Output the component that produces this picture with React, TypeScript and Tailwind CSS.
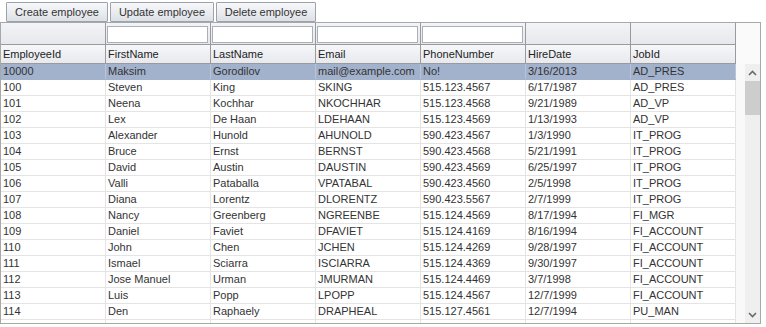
const columns = ['EmployeeId', 'FirstName', 'LastName', 'Email', 'PhoneNumber', 'HireDate', 'JobId'];
const filterable = [false, true, true, true, true, false, false];

const rows = [
  ['10000', 'Maksim', 'Gorodilov', 'mail@example.com', 'No!', '3/16/2013', 'AD_PRES'],
  ['100', 'Steven', 'King', 'SKING', '515.123.4567', '6/17/1987', 'AD_PRES'],
  ['101', 'Neena', 'Kochhar', 'NKOCHHAR', '515.123.4568', '9/21/1989', 'AD_VP'],
  ['102', 'Lex', 'De Haan', 'LDEHAAN', '515.123.4569', '1/13/1993', 'AD_VP'],
  ['103', 'Alexander', 'Hunold', 'AHUNOLD', '590.423.4567', '1/3/1990', 'IT_PROG'],
  ['104', 'Bruce', 'Ernst', 'BERNST', '590.423.4568', '5/21/1991', 'IT_PROG'],
  ['105', 'David', 'Austin', 'DAUSTIN', '590.423.4569', '6/25/1997', 'IT_PROG'],
  ['106', 'Valli', 'Pataballa', 'VPATABAL', '590.423.4560', '2/5/1998', 'IT_PROG'],
  ['107', 'Diana', 'Lorentz', 'DLORENTZ', '590.423.5567', '2/7/1999', 'IT_PROG'],
  ['108', 'Nancy', 'Greenberg', 'NGREENBE', '515.124.4569', '8/17/1994', 'FI_MGR'],
  ['109', 'Daniel', 'Faviet', 'DFAVIET', '515.124.4169', '8/16/1994', 'FI_ACCOUNT'],
  ['110', 'John', 'Chen', 'JCHEN', '515.124.4269', '9/28/1997', 'FI_ACCOUNT'],
  ['111', 'Ismael', 'Sciarra', 'ISCIARRA', '515.124.4369', '9/30/1997', 'FI_ACCOUNT'],
  ['112', 'Jose Manuel', 'Urman', 'JMURMAN', '515.124.4469', '3/7/1998', 'FI_ACCOUNT'],
  ['113', 'Luis', 'Popp', 'LPOPP', '515.124.4567', '12/7/1999', 'FI_ACCOUNT'],
  ['114', 'Den', 'Raphaely', 'DRAPHEAL', '515.127.4561', '12/7/1994', 'PU_MAN'],
  ['', '', '', '', '', '', ''],
];

function ToolButton({ label, width }: { label: string; width: string }) {
  return (
    <button className={`${width} h-[20px] border border-[#9da3ad] rounded-[1px] bg-gradient-to-b from-[#f7f8fa] to-[#dde1e7] text-[11px] leading-[18px] text-[#333]`}>
      {label}
    </button>
  );
}

function Chevron({ up }: { up?: boolean }) {
  return (
    <svg width="9" height="6" viewBox="0 0 9 6" className="block">
      <path
        d={up ? 'M1 5 L4.5 1.5 L8 5' : 'M1 1 L4.5 4.5 L8 1'}
        fill="none"
        stroke="#6a6a6a"
        strokeWidth="1.6"
      />
    </svg>
  );
}

export default function App() {
  return (
    <div className="w-[766px] h-[327px] bg-white overflow-hidden" style={{ fontFamily: '"Liberation Sans", Arial, sans-serif' }}>
      <div className="flex gap-[2px] pl-[6px] pt-[2px] h-[22px]">
        <ToolButton label="Create employee" width="w-[102px]" />
        <ToolButton label="Update employee" width="w-[104px]" />
        <ToolButton label="Delete employee" width="w-[100px]" />
      </div>

      <div className="w-[761px] h-[302px] border border-[#a8a8a8] flex flex-col">
        {/* header */}
        <div className="flex">
          <div className="w-[735px] shrink-0">
            <div className="flex h-[22px] border-b border-[#9a9a9a] bg-gradient-to-b from-[#f3f4f7] to-[#e6e8ed]">
              {filterable.map((f, i) => (
                <div key={i} className="w-[105px] shrink-0 border-r border-[#9a9a9a] flex items-center pl-[1px]">
                  {f && (
                    <input
                      type="text"
                      className="w-[101px] h-[17px] mt-[2px] bg-white border border-[#a9b0ba] outline-none"
                    />
                  )}
                </div>
              ))}
            </div>
            <div className="flex h-[19px] border-b border-[#9a9a9a] bg-gradient-to-b from-[#f6f7f9] to-[#e7e9ee]">
              {columns.map((c) => (
                <div key={c} className="w-[105px] shrink-0 border-r border-[#9a9a9a] pl-[2px] text-[11px] leading-[18px] text-[#222]">
                  {c}
                </div>
              ))}
            </div>
          </div>
          <div className="flex-1 bg-[#fafafa]" />
        </div>

        {/* body */}
        <div className="flex flex-1 min-h-0">
          <div className="w-[735px] shrink-0 overflow-hidden">
            {rows.map((r, ri) => (
              <div
                key={ri}
                className={`flex h-[16px] border-b ${ri === 0 ? 'bg-[#a2b1cc] border-[#a2b1cc]' : 'bg-white border-[#e4e4e4]'}`}
              >
                {r.map((v, ci) => (
                  <div
                    key={ci}
                    className={`w-[105px] shrink-0 border-r pl-[2px] text-[11px] leading-[15px] text-[#333] whitespace-nowrap overflow-hidden ${ri === 0 ? 'border-[#b9c4d8]' : 'border-[#e4e4e4]'}`}
                  >
                    {v}
                  </div>
                ))}
              </div>
            ))}
          </div>
          <div className="w-[9px] shrink-0 bg-[#f9f9f9]" />
          <div className="w-[15px] shrink-0 bg-[#efefef] flex flex-col">
            <div className="h-[17px] flex items-center justify-center">
              <Chevron up />
            </div>
            <div className="h-[34px] bg-[#cdcdcd]" />
            <div className="flex-1" />
            <div className="h-[17px] flex items-center justify-center">
              <Chevron />
            </div>
          </div>
        </div>
      </div>
    </div>
  );
}
